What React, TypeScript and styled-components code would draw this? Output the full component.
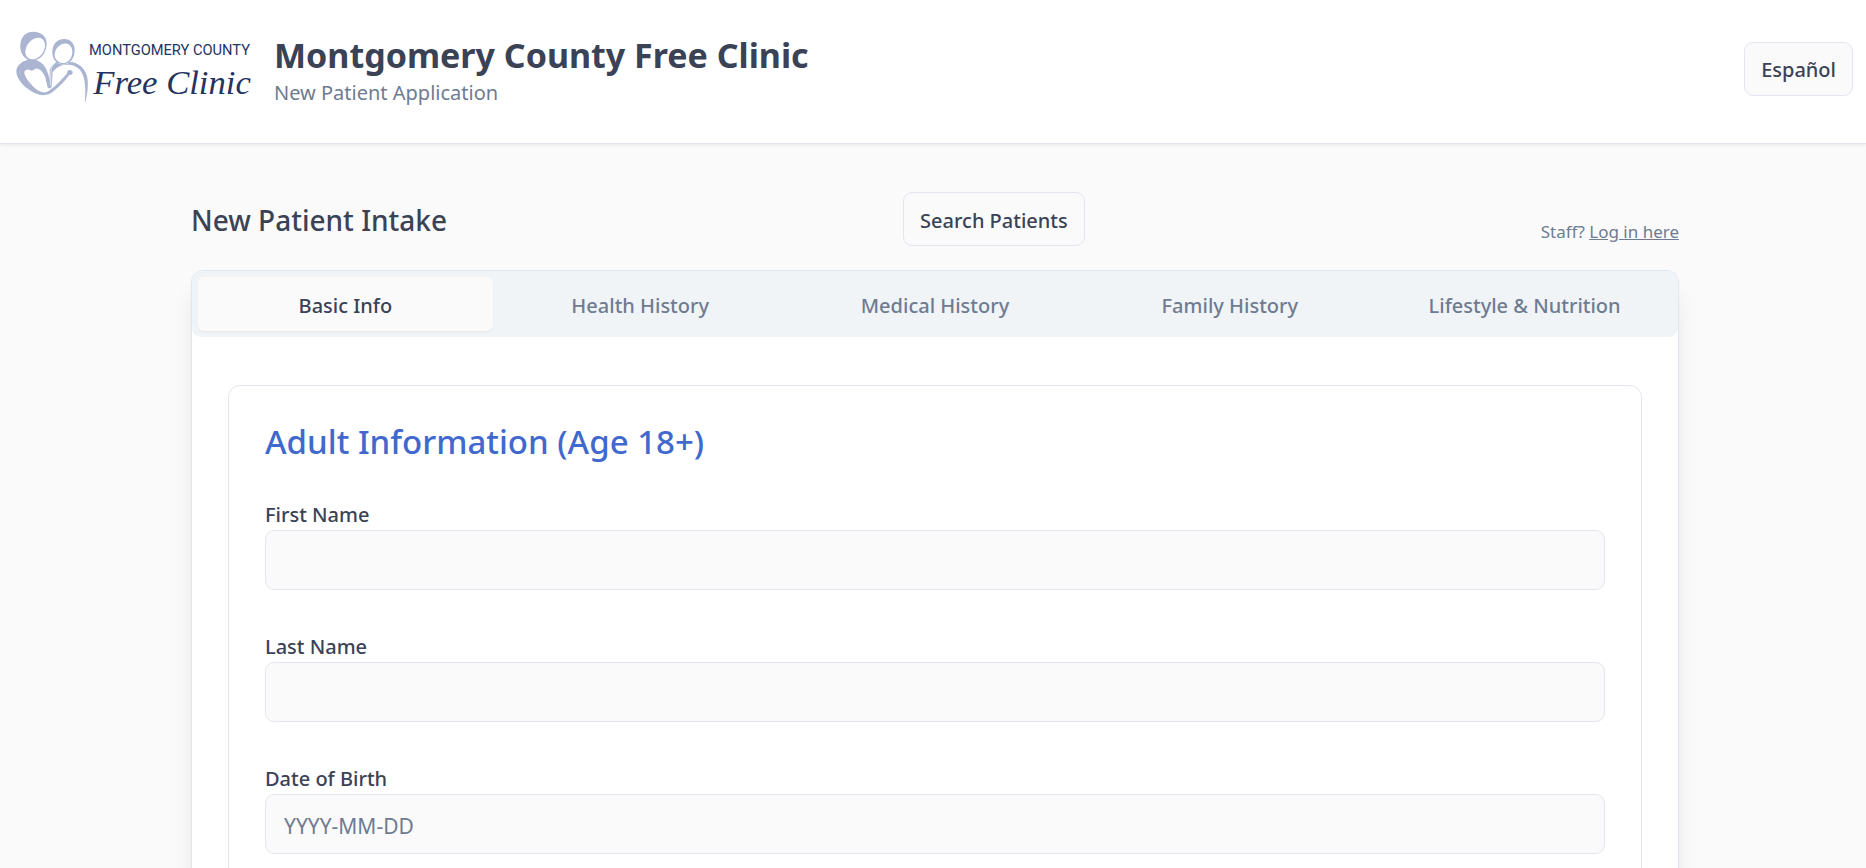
import React, { useState } from 'react';
import styled, { createGlobalStyle } from 'styled-components';

const color = {
  page: '#fafafa',
  surface: '#ffffff',
  text: '#3a4256',
  muted: '#6f7b91',
  border: '#e2e6ef',
  tabs: '#f0f4f7',
  accent: '#4169cd',
  logoLight: '#abb5d2',
  logoDark: '#25345f',
};

const GlobalStyle = createGlobalStyle`
  *, *::before, *::after { box-sizing: border-box; }
  body {
    margin: 0;
    background: ${color.page};
    color: ${color.text};
    font-family: 'Noto Sans', 'Open Sans', sans-serif;
    font-size: 20px;
    line-height: 30px;
  }
  h1, h2, h3, p { margin: 0; }
  button, input { font: inherit; color: inherit; }
`;

const Header = styled.header`
  display: flex;
  align-items: center;
  justify-content: space-between;
  padding: 30px 13px 36px 16px;
  background: ${color.surface};
  border-bottom: 1px solid ${color.border};
  box-shadow: 0 1px 3px rgba(0, 0, 0, 0.08);
`;

const Brand = styled.div`
  display: flex;
  gap: 22px;
`;

const BrandText = styled.div`
  display: flex;
  flex-direction: column;
  gap: 4px;
  padding-top: 5px;
`;

const BrandName = styled.h1`
  font-size: 34px;
  line-height: 40px;
  font-weight: 700;
`;

const BrandTagline = styled.p`
  color: ${color.muted};
  line-height: 28px;
`;

const LogoSvg = styled.svg`
  display: block;
  width: 236px;
  height: 76px;
`;

const CountyText = styled.text`
  font-family: Roboto, 'Liberation Sans', sans-serif;
  font-size: 44px;
`;

const ClinicText = styled.text`
  font-family: 'Liberation Serif', serif;
  font-style: italic;
  font-size: 104px;
`;

const OutlineButton = styled.button`
  height: 54px;
  padding: 3px 16px 0;
  border: 1px solid ${color.border};
  border-radius: 9px;
  background: ${color.page};
  font-weight: 500;
  cursor: pointer;
`;

const Main = styled.main`
  max-width: 1492px;
  margin: 0 auto;
  padding: 48px 0 48px 4px;
`;

const TitleRow = styled.div`
  display: flex;
  align-items: center;
  justify-content: space-between;
  margin-bottom: 24px;
`;

const PageTitle = styled.h2`
  padding-top: 2px;
  font-size: 28px;
  line-height: 36px;
  font-weight: 500;
`;

const StaffNote = styled.p`
  align-self: flex-end;
  color: ${color.muted};
  font-size: 17px;
  line-height: 28px;
`;

const StaffLink = styled.a`
  color: inherit;
  text-decoration: underline;
`;

const Card = styled.div`
  border: 1px solid ${color.border};
  border-radius: 12px;
  background: ${color.surface};
  box-shadow: 0 20px 25px -5px rgba(0, 0, 0, 0.1), 0 8px 10px -6px rgba(0, 0, 0, 0.1);
`;

const TabList = styled.div`
  display: grid;
  grid-template-columns: repeat(5, 1fr);
  padding: 6px;
  border-radius: 11px 11px 9px 9px;
  background: ${color.tabs};
`;

const Tab = styled.button<{ $active: boolean }>`
  height: 54px;
  padding: 3px 16px 0;
  border: 0;
  border-radius: 6px;
  background: ${(p) => (p.$active ? color.page : 'transparent')};
  box-shadow: ${(p) => (p.$active ? '0 1px 2px rgba(0, 0, 0, 0.06)' : 'none')};
  color: ${(p) => (p.$active ? color.text : color.muted)};
  font-weight: 500;
  cursor: pointer;
`;

const Panel = styled.div`
  padding: 48px 36px 36px;
`;

const Section = styled.form`
  padding: 36px;
  border: 1px solid ${color.border};
  border-radius: 12px;
`;

const SectionTitle = styled.h3`
  margin-bottom: 38px;
  color: ${color.accent};
  font-size: 33px;
  line-height: 40px;
  font-weight: 500;
`;

const FieldList = styled.div`
  display: grid;
  gap: 42px;
`;

const Field = styled.div`
  display: grid;
`;

const FieldLabel = styled.label`
  font-weight: 500;
`;

const FieldInput = styled.input`
  width: 100%;
  height: 60px;
  padding: 3px 18px 0;
  border: 1px solid ${color.border};
  border-radius: 9px;
  background: ${color.page};
  font-size: 21px;

  &::placeholder {
    color: ${color.muted};
    opacity: 1;
  }
`;

function Logo() {
  return (
    <LogoSvg viewBox="18 12 708 228" role="img" aria-label="Montgomery County Free Clinic logo">
      <g fill={color.logoLight} fillRule="evenodd">
        {/* left head */}
        <path d="M56 103C38 95 29 76 31 55C33 31 48 17 70 17C94 17 111 32 110 54C109 75 98 96 80 101C72 104 63 105 56 103ZM61 99C76 104 94 92 102 73C110 54 103 37 87 35C70 34 54 47 48 66C43 82 48 95 61 99Z" />
        {/* right head */}
        <path d="M139 108C131 101 126 90 127 76C128 54 141 39 162 39C182 39 195 53 194 74C193 90 188 102 178 109C165 117 149 116 139 108ZM146 107C158 116 176 110 184 93C191 76 186 57 171 53C156 49 140 61 135 79C132 91 136 101 146 107Z" />
        {/* left figure and the arm that closes the heart */}
        <path d="M52 102C35 106 20 119 19 134C18 153 34 174 55 190C76 206 96 211 116 205C132 197 149 180 164 164L178 147C187 147 190 142 187 136C183 131 174 131 172 137C171 140 172 142 169 145C154 162 128 190 110 198C99 202 83 195 71 183C56 168 43 151 43 139C44 131 53 128 60 132C66 137 70 131 77 128C88 126 99 137 106 154L112 181C113 190 124 189 125 181L128 139C134 130 145 121 158 118C184 113 204 121 214 138C227 158 228 195 224 232C233 208 236 174 231 150C224 124 201 109 180 108C163 120 147 116 139 107C130 113 122 120 119 132L119 165C116 145 110 125 97 113C86 103 69 98 52 102Z" />
      </g>
      <path d="M137 110C127 117 123 124 123 138L121 178" fill="none" stroke={color.surface} strokeWidth="2" />
      <g fill={color.logoDark}>
        <CountyText x="237" y="86">MONTGOMERY COUNTY</CountyText>
        <ClinicText x="250" y="204">Free Clinic</ClinicText>
      </g>
    </LogoSvg>
  );
}

const tabs = ['Basic Info', 'Health History', 'Medical History', 'Family History', 'Lifestyle & Nutrition'];

const fields = [
  { id: 'first-name', label: 'First Name', placeholder: '' },
  { id: 'last-name', label: 'Last Name', placeholder: '' },
  { id: 'birth-date', label: 'Date of Birth', placeholder: 'YYYY-MM-DD' },
];

export default function App() {
  const [active, setActive] = useState(tabs[0]);

  return (
    <>
      <GlobalStyle />
      <Header>
        <Brand>
          <Logo />
          <BrandText>
            <BrandName>Montgomery County Free Clinic</BrandName>
            <BrandTagline>New Patient Application</BrandTagline>
          </BrandText>
        </Brand>
        <OutlineButton type="button">Español</OutlineButton>
      </Header>
      <Main>
        <TitleRow>
          <PageTitle>New Patient Intake</PageTitle>
          <OutlineButton type="button">Search Patients</OutlineButton>
          <StaffNote>
            Staff? <StaffLink href="#login">Log in here</StaffLink>
          </StaffNote>
        </TitleRow>
        <Card>
          <TabList role="tablist">
            {tabs.map((name) => (
              <Tab
                key={name}
                type="button"
                role="tab"
                aria-selected={name === active}
                $active={name === active}
                onClick={() => setActive(name)}
              >
                {name}
              </Tab>
            ))}
          </TabList>
          <Panel role="tabpanel">
            <Section>
              <SectionTitle>Adult Information (Age 18+)</SectionTitle>
              <FieldList>
                {fields.map((f) => (
                  <Field key={f.id}>
                    <FieldLabel htmlFor={f.id}>{f.label}</FieldLabel>
                    <FieldInput id={f.id} type="text" placeholder={f.placeholder} />
                  </Field>
                ))}
              </FieldList>
            </Section>
          </Panel>
        </Card>
      </Main>
    </>
  );
}
